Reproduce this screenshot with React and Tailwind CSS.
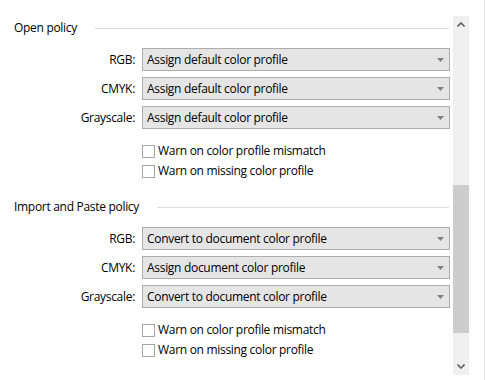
import React from "react";

const font = { fontFamily: '"Open Sans", "Noto Sans", sans-serif' };

function Caret({ className }) {
  return (
    <svg width="7" height="4" viewBox="0 0 7 4" className={className}>
      <path d="M0 0h7L3.5 4z" fill="#7f7f7f" />
    </svg>
  );
}

function SelectRow({ label, value }) {
  return (
    <div className="flex h-[23px] items-center">
      <div className="w-[136px] pr-px text-right">{label}</div>
      <div className="ml-[6px] flex h-[23px] w-[308px] items-center justify-between border border-[#adadad] bg-[#e5e5e5] pl-[4px] pr-[5px]">
        <span>{value}</span>
        <Caret />
      </div>
    </div>
  );
}

function CheckRow({ label }) {
  return (
    <div className="flex h-5 items-center pl-[142px]">
      <div className="h-[13px] w-[13px] border border-[#a6a6a6] bg-white" />
      <span className="ml-[3px]">{label}</span>
    </div>
  );
}

function SectionHeader({ title }) {
  return (
    <div className="flex h-4 items-center pl-[14px]">
      <span>{title}</span>
      <div className="ml-[18px] mr-[4px] h-px flex-1 bg-[#dcdcdc]" />
    </div>
  );
}

function Section({ title, values, className }) {
  return (
    <div className={`flex flex-col ${className}`}>
      <SectionHeader title={title} />
      <div className="mt-3 flex flex-col gap-[6px]">
        <SelectRow label="RGB:" value={values[0]} />
        <SelectRow label="CMYK:" value={values[1]} />
        <SelectRow label="Grayscale:" value={values[2]} />
      </div>
      <div className="mt-3 flex flex-col">
        <CheckRow label="Warn on color profile mismatch" />
        <CheckRow label="Warn on missing color profile" />
      </div>
    </div>
  );
}

export default function App() {
  return (
    <div
      className="flex h-[380px] w-[485px] overflow-hidden bg-white text-[12px] leading-4 tracking-[-0.3px] text-black"
      style={font}
    >
      <div className="w-[453px] pt-5">
        <Section
          title="Open policy"
          values={["Assign default color profile", "Assign default color profile", "Assign default color profile"]}
        />
        <Section
          className="mt-[18px]"
          title="Import and Paste policy"
          values={["Convert to document color profile", "Assign document color profile", "Convert to document color profile"]}
        />
      </div>
      <div className="mt-4 flex h-[359px] w-4 flex-col bg-[#f0f0f0]">
        <div className="flex h-[17px] items-center justify-center">
          <svg width="8" height="5" viewBox="0 0 8 5">
            <path d="M0.5 4.5L4 1L7.5 4.5" stroke="#606060" strokeWidth="1.6" fill="none" />
          </svg>
        </div>
        <div className="h-[152px]" />
        <div className="h-[148px] bg-[#cdcdcd]" />
        <div className="flex-1" />
        <div className="flex h-[17px] items-center justify-center">
          <svg width="8" height="5" viewBox="0 0 8 5">
            <path d="M0.5 0.5L4 4L7.5 0.5" stroke="#606060" strokeWidth="1.6" fill="none" />
          </svg>
        </div>
      </div>
      <div className="ml-[15px] h-full w-px bg-[#e3e3e3]" />
    </div>
  );
}
